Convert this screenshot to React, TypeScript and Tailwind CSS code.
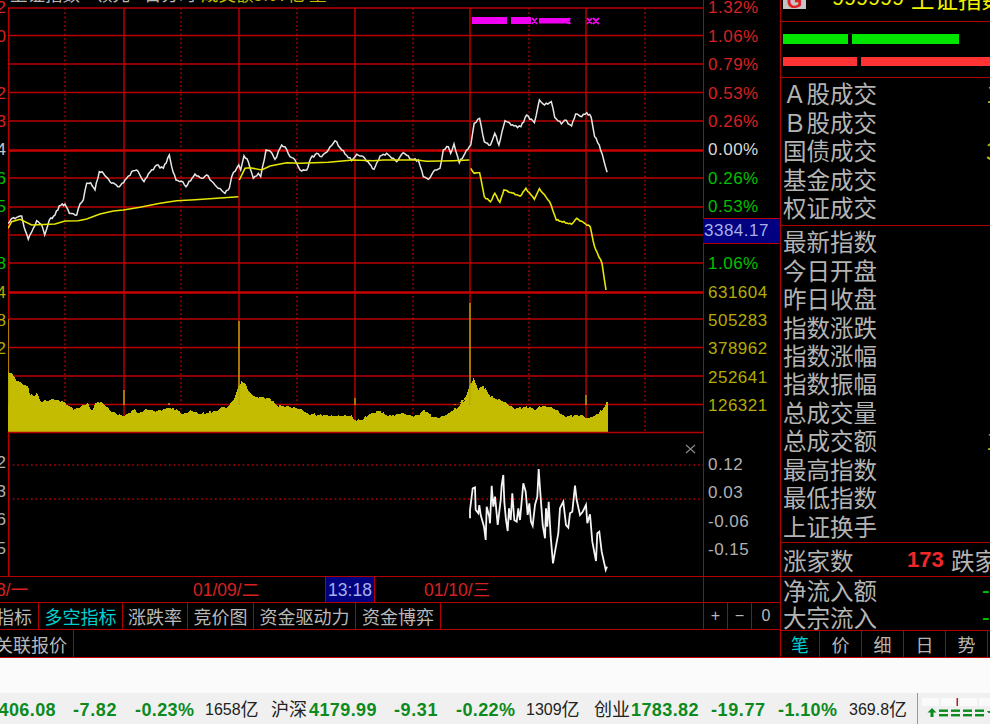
const RED = '#b80000'
const SANS = "font-['Liberation_Sans','Noto_Sans_CJK_SC',sans-serif]"
const CJK = "font-['Noto_Sans_CJK_SC',sans-serif]"

type Pt = [number, number]

const z1 = (p: number[]): Pt[] => pairs(p).map(([x, y]) => [x / 3, y / 3])
const z2 = (p: number[]): Pt[] => pairs(p).map(([x, y]) => [x / 2.958 + 460, y / 3])
const z3 = (p: number[]): Pt[] => pairs(p).map(([x, y]) => [x / 3, y / 3 + 290])
const z4 = (p: number[]): Pt[] => pairs(p).map(([x, y]) => [x / 2.958 + 460, y / 3 + 290])
const z11 = (p: number[]): Pt[] => pairs(p).map(([x, y]) => [x / 3 + 460, y / 3 + 455])

function pairs(p: number[]): Pt[] {
  const out: Pt[] = []
  for (let i = 0; i < p.length; i += 2) out.push([p[i], p[i + 1]])
  return out
}

// small wiggle between traced points so the line looks like tick data
function jag(points: Pt[], amount: number): Pt[] {
  const out: Pt[] = []
  let n = 0
  for (let i = 0; i < points.length - 1; i++) {
    const [x0, y0] = points[i]
    const [x1, y1] = points[i + 1]
    const steps = Math.max(1, Math.round((x1 - x0) / 1.6))
    for (let s = 0; s < steps; s++) {
      const t = s / steps
      const w = s === 0 ? 0 : Math.sin(n * 2.3) * Math.cos(n * 0.7) * amount
      out.push([x0 + (x1 - x0) * t, y0 + (y1 - y0) * t + w])
      n++
    }
  }
  out.push(points[points.length - 1])
  return out
}

const str = (p: Pt[]) => p.map(([x, y]) => `${x.toFixed(1)},${y.toFixed(1)}`).join(' ')

const WHITE_LINE: Pt[] = [
  ...z1([
    24, 670, 36, 655, 50, 652, 65, 648, 72, 680, 85, 718, 100, 685, 110, 662, 125, 675, 134, 705, 148, 660, 165, 645,
    178, 617, 195, 612, 208, 640, 230, 645, 240, 612, 250, 600, 260, 550, 272, 548, 285, 570, 298, 515, 310, 520, 330,
    545, 358, 560, 375, 540, 400, 512, 410, 510, 432, 545, 445, 522, 470, 495, 490, 505, 508, 465, 515, 500, 528, 540,
    548, 545, 558, 560, 585, 522, 605, 535, 620, 525, 645, 555, 675, 580, 688, 565, 695, 530, 716, 495, 722, 510, 732,
    467, 745, 485, 760, 535, 775, 520, 782, 530, 798, 450, 812, 455, 825, 478, 845, 435, 855, 440, 870, 470, 885, 480,
    900, 510, 920, 510, 932, 475, 950, 460, 965, 470, 985, 450, 1005, 422, 1025, 450, 1055, 482, 1070, 463, 1090, 470,
    1122, 508, 1140, 468, 1160, 460, 1190, 485, 1210, 458, 1235, 478, 1255, 480, 1270, 530, 1285, 538, 1305, 510, 1320,
    505, 1330, 450, 1345, 440, 1352, 460, 1362, 432, 1378, 488, 1395, 460, 1408, 440,
  ]),
  ...z2([
    32, 435, 42, 370, 58, 355, 72, 425, 90, 435, 103, 400, 115, 435, 133, 362, 160, 378, 180, 380, 197, 345, 220, 368,
    235, 300, 250, 315, 270, 305, 280, 352, 300, 372, 310, 360, 330, 378, 342, 342, 360, 350, 375, 338, 388, 352, 398,
    410, 412, 435, 425, 480, 435, 517,
  ]),
]

const YELLOW_A = z1([
  24, 685, 35, 665, 60, 658, 95, 675, 165, 672, 195, 663, 235, 662, 260, 657, 300, 642, 340, 633, 370, 630, 420, 622,
  480, 610, 530, 602, 585, 599, 650, 595, 715, 590,
])
const YELLOW_B = z1([
  718, 540, 735, 505, 750, 503, 785, 510, 810, 498, 860, 488, 900, 490, 985, 487, 1060, 480, 1120, 482, 1150, 480, 1250,
  480, 1280, 484, 1360, 482, 1408, 480,
])
const YELLOW_C = z2([
  32, 505, 42, 520, 58, 518, 72, 590, 90, 605, 103, 580, 118, 607, 130, 570, 178, 588, 195, 565, 220, 598, 235, 566, 265,
  605, 285, 660, 330, 673, 345, 655, 385, 680, 398, 740, 420, 790, 432, 870,
])

const VOLUME: Pt[] = [
  ...z3([
    24, 243, 35, 250, 45, 265, 70, 285, 85, 290, 90, 315, 105, 318, 110, 308, 122, 335, 160, 328, 190, 335, 200, 345, 225,
    358, 262, 340, 275, 362, 290, 338, 305, 335, 335, 365, 372, 380, 405, 356, 415, 370, 440, 357, 465, 365, 505, 355, 530,
    358, 548, 373, 575, 362, 600, 373, 650, 362, 665, 352, 685, 350, 705, 320, 715, 290, 725, 272, 738, 285, 745, 303, 765,
    320, 810, 325, 830, 345, 880, 352, 905, 358, 925, 372, 1000, 378, 1055, 376, 1065, 390, 1085, 390, 1105, 375, 1140,
    362, 1165, 380, 1205, 370, 1235, 378, 1255, 375, 1272, 358, 1300, 382, 1320, 382, 1345, 370, 1375, 350, 1395, 330,
  ]),
  ...z4([
    0, 340, 20, 315, 30, 285, 40, 265, 55, 300, 68, 285, 90, 320, 130, 335, 160, 355, 205, 350, 225, 360, 235, 348, 270, 350,
    310, 378, 360, 375, 378, 385, 395, 378, 420, 362, 437, 335,
  ]),
]

const SPIKES: Pt[] = [
  [8, 319],
  [124, 390],
  [169, 403],
  [239, 321],
  [355, 398],
  [455, 404],
  [470, 303],
  [586, 395],
]

const SUB_LINE = z11([
  30, 190, 30, 165, 38, 100, 45, 97, 47, 165, 55, 175, 58, 150, 62, 180, 72, 215, 77, 255, 80, 155, 88, 185, 90, 205, 95,
  92, 100, 155, 105, 125, 108, 155, 113, 210, 122, 135, 125, 90, 130, 60, 133, 140, 138, 195, 143, 228, 147, 160, 152, 195,
  157, 115, 163, 195, 170, 200, 175, 160, 180, 195, 190, 85, 197, 110, 203, 180, 208, 145, 213, 200, 218, 212, 225, 150,
  232, 125, 236, 42, 240, 100, 248, 210, 255, 250, 258, 160, 262, 215, 266, 140, 272, 245, 279, 325, 285, 290, 295, 235,
  300, 160, 310, 140, 318, 210, 325, 218, 330, 175, 337, 170, 345, 92, 350, 135, 360, 180, 368, 170, 378, 150, 382, 205,
  390, 178, 397, 260, 408, 318, 412, 235, 418, 230, 425, 290, 437, 345, 441, 335,
])

const H_LINES = [8, 35.5, 64, 92.5, 121, 178, 207, 235, 263, 319, 347.5, 376, 404.5]
const V_SOLID = [124, 239, 355, 470, 586]
const V_DOT = [65, 181, 297, 413, 529, 645]

function Chart() {
  return (
    <svg width="695" height="577" viewBox="8 0 695 577" className="block shrink-0">
      {H_LINES.map((y) => (
        <line key={y} x1="8" x2="703" y1={y} y2={y} stroke={RED} strokeWidth="1.5" />
      ))}
      {V_SOLID.map((x) => (
        <line key={x} x1={x} x2={x} y1="8" y2="432" stroke={RED} strokeWidth="1.5" />
      ))}
      {V_DOT.map((x) => (
        <line key={x} x1={x} x2={x} y1="8" y2="432" stroke={RED} strokeWidth="1.5" strokeDasharray="1.6 2.7" />
      ))}
      <line x1="8" x2="703" y1="150.5" y2="150.5" stroke="#c80000" strokeWidth="2.6" />
      <line x1="8" x2="703" y1="292.5" y2="292.5" stroke="#c80000" strokeWidth="2.6" />
      <line x1="8.5" x2="8.5" y1="8" y2="577" stroke={RED} strokeWidth="1.6" />

      {/* volume */}
      <polygon points={`8,432 ${str(jag(VOLUME, 1.6))} 607.7,432`} fill="#c4bc00" shapeRendering="crispEdges" />
      {SPIKES.map(([x, y]) => (
        <line key={x} x1={x} x2={x} y1={y} y2="405" stroke="#b4ac00" strokeWidth="1.4" />
      ))}
      <line x1="8" x2="703" y1="432.5" y2="432.5" stroke="#b80000" strokeWidth="1.5" />

      {/* price and average */}
      <polyline points={str(jag(WHITE_LINE, 1.3))} fill="none" stroke="#e6e6e6" strokeWidth="1.5" />
      <polyline points={str(YELLOW_A)} fill="none" stroke="#e6e600" strokeWidth="1.6" />
      <polyline points={str(YELLOW_B)} fill="none" stroke="#e6e600" strokeWidth="1.6" />
      <polyline points={str(jag(YELLOW_C, 0.8))} fill="none" stroke="#e6e600" strokeWidth="1.6" />

      {/* signal marks */}
      <rect x="472" y="17" width="35" height="7" fill="#f000f0" />
      <rect x="511" y="17" width="20" height="7" fill="#f000f0" />
      <rect x="539" y="18" width="29" height="5.5" fill="#f000f0" />
      <path d="M532 18l5 6m0-6l-5 6M568 18l2 6m0-6l-2 6M587 18l5 6m0-6l-5 6M593 18l6 6m0-6l-6 6" stroke="#f000f0" strokeWidth="1.8" />

      {/* sub chart */}
      <line x1="8" x2="703" y1="465" y2="465" stroke={RED} strokeWidth="1.5" strokeDasharray="1.6 3" />
      <line x1="8" x2="703" y1="499" y2="499" stroke={RED} strokeWidth="1.5" strokeDasharray="1.6 3" />
      <polyline points={str(SUB_LINE)} fill="none" stroke="#f4f4f4" strokeWidth="1.8" />
      <path d="M686 445l9 8m0-8l-9 8" stroke="#8c8c8c" strokeWidth="1.1" />
    </svg>
  )
}

const AXIS: { text: string; color: string }[] = [
  { text: '1.32%', color: 'text-[#d82020]' },
  { text: '1.06%', color: 'text-[#d82020]' },
  { text: '0.79%', color: 'text-[#d82020]' },
  { text: '0.53%', color: 'text-[#d82020]' },
  { text: '0.26%', color: 'text-[#d82020]' },
  { text: '0.00%', color: 'text-[#d8d8d8]' },
  { text: '0.26%', color: 'text-[#00c000]' },
  { text: '0.53%', color: 'text-[#00c000]' },
  { text: '', color: '' },
  { text: '1.06%', color: 'text-[#00c000]' },
  { text: '631604', color: 'text-[#b4ac00]' },
  { text: '505283', color: 'text-[#b4ac00]' },
  { text: '378962', color: 'text-[#b4ac00]' },
  { text: '252641', color: 'text-[#b4ac00]' },
  { text: '126321', color: 'text-[#b4ac00]' },
  { text: '', color: '' },
  { text: '0.12', color: 'text-[#b0b0b0]' },
  { text: '0.03', color: 'text-[#b0b0b0]' },
  { text: '-0.06', color: 'text-[#b0b0b0]' },
  { text: '-0.15', color: 'text-[#b0b0b0]' },
]

const GUTTER: { text: string; color: string }[] = [
  { text: '2', color: 'text-[#d82020]' },
  { text: '0', color: 'text-[#d82020]' },
  { text: '', color: '' },
  { text: '2', color: 'text-[#d82020]' },
  { text: '3', color: 'text-[#d82020]' },
  { text: '4', color: 'text-[#c8c8c8]' },
  { text: '6', color: 'text-[#00c000]' },
  { text: '5', color: 'text-[#00c000]' },
  { text: '', color: '' },
  { text: '8', color: 'text-[#00c000]' },
  { text: '4', color: 'text-[#b4ac00]' },
  { text: '8', color: 'text-[#b4ac00]' },
  { text: '2', color: 'text-[#b4ac00]' },
  { text: '', color: '' },
  { text: '', color: '' },
  { text: '', color: '' },
  { text: '2', color: 'text-[#b0b0b0]' },
  { text: '3', color: 'text-[#b0b0b0]' },
  { text: '6', color: 'text-[#b0b0b0]' },
  { text: '5', color: 'text-[#b0b0b0]' },
]

const GROUP_A = ['Ａ股成交', 'Ｂ股成交', '国债成交', '基金成交', '权证成交']
const GROUP_A_VALUES = ['1', '', '3', '', '']
const GROUP_B = ['最新指数', '今日开盘', '昨日收盘', '指数涨跌', '指数涨幅', '指数振幅', '总成交量', '总成交额', '最高指数', '最低指数', '上证换手']

const TICKER: { text: string; unit?: string; cls: string }[] = [
  { text: '3406.08', cls: 'w-[73px] justify-end pr-[17px] font-bold text-[#0b8a1e] text-[18px] tracking-[0.4px]' },
  { text: '-7.82', cls: 'w-[62px] font-bold text-[#0b8a1e] text-[18px] tracking-[0.6px]' },
  { text: '-0.23%', cls: 'w-[70px] font-bold text-[#0b8a1e] text-[18px] tracking-[0.4px]' },
  { text: '1658', unit: '亿', cls: 'w-[66px] text-[#222222] text-[16px]' },
  { text: '沪深', cls: 'w-[38px] text-[#222222] text-[18px]' },
  { text: '4179.99', cls: 'w-[85px] font-bold text-[#0b8a1e] text-[18px] tracking-[0.4px]' },
  { text: '-9.31', cls: 'w-[62px] font-bold text-[#0b8a1e] text-[18px] tracking-[0.6px]' },
  { text: '-0.22%', cls: 'w-[70px] font-bold text-[#0b8a1e] text-[18px] tracking-[0.4px]' },
  { text: '1309', unit: '亿', cls: 'w-[68px] text-[#222222] text-[16px]' },
  { text: '创业', cls: 'w-[37px] text-[#222222] text-[18px]' },
  { text: '1783.82', cls: 'w-[80px] font-bold text-[#0b8a1e] text-[18px] tracking-[0.4px]' },
  { text: '-19.77', cls: 'w-[67px] font-bold text-[#0b8a1e] text-[18px] tracking-[0.6px]' },
  { text: '-1.10%', cls: 'w-[71px] font-bold text-[#0b8a1e] text-[18px] tracking-[0.4px]' },
  { text: '369.8', unit: '亿', cls: 'w-[68px] text-[#222222] text-[16px]' },
]

function Gauge() {
  return (
    <svg width="69" height="24" viewBox="0 0 69 24" className="block shrink-0">
      <rect x="1" y="1" width="17" height="8" fill="#fafafa" />
      <rect x="20" y="1" width="17" height="8" fill="#fafafa" />
      <rect x="39" y="1" width="17" height="8" fill="#fafafa" />
      <rect x="58" y="1" width="11" height="8" fill="#fafafa" />
      <rect x="35.5" y="1" width="1.5" height="8" fill="#b02020" />
      <path d="M11 11l-4.5 4.5h3V20h3v-4.5h3z" fill="#0b8a1e" />
      {[18, 30, 42, 54].map((x) => (
        <g key={x} fill="#0b8a1e">
          <rect x={x} y="12.5" width="9" height="2.4" />
          <rect x={x} y="17" width="9" height="2.4" />
        </g>
      ))}
      <path d="M66 14h3v2h-1.5z" fill="#0b8a1e" />
    </svg>
  )
}

export default function App() {
  return (
    <div className={`flex h-[724px] w-[990px] flex-col overflow-hidden bg-[#f0f0f0] ${SANS}`}>
      <div className="flex h-[658px] shrink-0 border-b border-[#c00000] bg-black">
        {/* left: chart area */}
        <div className="flex w-[780px] shrink-0 flex-col">
          <div className="relative flex h-[577px] shrink-0 border-b border-[#b00000]">
            <div className="-mt-[6px] mr-[2px] flex w-[6px] shrink-0 flex-col overflow-hidden">
              {GUTTER.map((g, i) => (
                <div key={i} className={`flex h-[28.45px] shrink-0 items-center justify-end text-[17px] leading-[20px] ${g.color}`}>
                  {g.text}
                </div>
              ))}
            </div>
            <Chart />
            <div className="relative w-[77px] shrink-0 border-l border-[#b80000]">
              <div className="-mt-[6px] flex flex-col pl-[4px]">
                {AXIS.map((a, i) => (
                  <div
                    key={i}
                    className={`flex shrink-0 items-center text-[17px] leading-[20px] tracking-[0.5px] whitespace-nowrap ${a.color} ${
                      i === 15 ? 'h-[30px]' : 'h-[28.45px]'
                    }`}
                  >
                    {a.text}
                  </div>
                ))}
              </div>
              <div className="absolute top-[218px] -left-px flex h-[26px] w-[77px] items-center border-y border-[#b80000] bg-[#000080] pl-[1px] text-[17px] leading-[20px] tracking-[0.5px] text-[#a8b0e8]">
                3384.17
              </div>
            </div>
            {/* title strip, mostly scrolled off the top of the window */}
            <div className={`absolute top-0 left-[10px] flex h-[4px] items-end overflow-hidden text-[17.5px] leading-[20px] whitespace-nowrap text-[#b8b8b8] ${CJK}`}>
              <span className="w-[85px] shrink-0">上证指数</span>
              <span className="w-[49px] shrink-0">领先</span>
              <span className="w-[57px] shrink-0">日分时</span>
              <span className="text-[#c4bc00]">成交额5.07亿 量</span>
            </div>
          </div>

          <div className={`flex h-[26px] shrink-0 items-stretch border-b border-[#b00000] text-[17.5px] leading-[22px] text-[#d82020] ${SANS}`}>
            <div className="flex w-[703px] shrink-0 items-center overflow-hidden">
              <span className="-ml-[38px] w-[231px] shrink-0 whitespace-nowrap">01/08/一</span>
              <span className="w-[132px] shrink-0 whitespace-nowrap">01/09/二</span>
              <span className="flex h-full w-[50px] shrink-0 items-center justify-center border-x border-[#b00000] bg-[#000080] text-[#a8b0e8]">
                13:18
              </span>
              <span className="ml-[49px] whitespace-nowrap">01/10/三</span>
            </div>
            <div className="flex-1 border-l border-[#b00000]" />
          </div>

          <div className={`flex h-[27px] shrink-0 items-stretch border-b border-[#b00000] text-[18px] leading-[24px] text-[#b8b8b8] ${CJK}`}>
            <div className="flex w-[703px] shrink-0 overflow-hidden">
              <div className="flex w-[39px] shrink-0 items-center justify-end border-r border-[#b00000] pr-[6px] whitespace-nowrap">指标</div>
              <div className="flex w-[84px] shrink-0 items-center justify-center border-r border-[#b00000] text-[#00d0d0]">多空指标</div>
              <div className="flex w-[65px] shrink-0 items-center justify-center border-r border-[#b00000]">涨跌率</div>
              <div className="flex w-[66px] shrink-0 items-center justify-center border-r border-[#b00000]">竞价图</div>
              <div className="flex w-[102px] shrink-0 items-center justify-center border-r border-[#b00000]">资金驱动力</div>
              <div className="flex w-[85px] shrink-0 items-center justify-center border-r border-[#b00000]">资金博弈</div>
            </div>
            <div className={`flex flex-1 border-l border-[#b00000] text-[16px] text-[#b8b8b8] ${SANS}`}>
              <div className="flex w-[24px] items-center justify-center border-r border-[#b00000]">+</div>
              <div className="flex w-[24px] items-center justify-center border-r border-[#b00000]">−</div>
              <div className="flex flex-1 items-center justify-center">0</div>
            </div>
          </div>

          <div className={`flex flex-1 text-[18px] leading-[24px] text-[#b8b8b8] ${CJK}`}>
            <div className="flex w-[74px] shrink-0 items-center justify-end overflow-hidden border-r border-[#b00000] pr-[6px] whitespace-nowrap">
              关联报价
            </div>
          </div>
        </div>

        {/* right: quote panel */}
        <div className={`flex flex-1 flex-col overflow-hidden border-l border-[#b00000] text-[23.5px] leading-[26px] text-[#b4b4b4] ${CJK}`}>
          <div className="flex h-[22px] shrink-0 items-start border-b border-[#b00000] pl-[2px]">
            <div className="flex h-[9px] w-[23px] shrink-0 items-end justify-center overflow-hidden bg-[#c4c4c4] text-[20px] leading-[20px] font-bold text-[#e02020]">
              <span className={`-mb-[2px] ${SANS}`}>G</span>
            </div>
            <div className="-mt-[15px] ml-[26px] flex items-center whitespace-nowrap text-[#f0f000]">
              <span className={`text-[21.6px] ${SANS}`}>999999</span>
              <span className="ml-[7px]">上证指数</span>
            </div>
          </div>
          <div className="flex h-[56px] shrink-0 flex-col justify-center gap-[13px] border-b border-[#b00000] pl-[2px]">
            <div className="flex h-[10px] gap-[4px]">
              <div className="h-full w-[65px] bg-[#00e600]" />
              <div className="h-full w-[107px] bg-[#00e600]" />
            </div>
            <div className="flex h-[9px] gap-[4px]">
              <div className="h-full w-[74px] shrink-0 bg-[#ff3333]" />
              <div className="h-full w-[140px] shrink-0 bg-[#ff3333]" />
            </div>
          </div>
          <div className="flex h-[148px] shrink-0 flex-col border-b border-[#b00000] pt-[1px] pl-[2px]">
            {GROUP_A.map((label, i) => (
              <div key={label} className="flex h-[28.45px] shrink-0 items-center whitespace-nowrap">
                <span className="w-[203px] shrink-0">{label}</span>
                <span className="text-[#c4bc00]">{GROUP_A_VALUES[i]}</span>
              </div>
            ))}
          </div>
          <div className="flex h-[317px] shrink-0 flex-col border-b border-[#b00000] pt-[1px] pl-[2px]">
            {GROUP_B.map((label) => (
              <div key={label} className="flex h-[28.45px] shrink-0 items-center whitespace-nowrap">
                <span className="w-[203px] shrink-0">{label}</span>
                {label === '总成交额' && <span className="text-[#c4bc00]">1</span>}
              </div>
            ))}
          </div>
          <div className="flex h-[34px] shrink-0 items-center border-b border-[#b00000] pl-[2px] whitespace-nowrap">
            <span className="w-[124px] shrink-0">涨家数</span>
            <span className={`w-[44px] shrink-0 text-[22px] font-bold text-[#f02828] ${SANS}`}>173</span>
            <span>跌家数</span>
          </div>
          <div className="flex h-[54px] shrink-0 flex-col justify-center border-b border-[#b00000] pl-[2px]">
            <div className="flex h-[27px] shrink-0 items-center whitespace-nowrap">
              <span className="w-[199px] shrink-0">净流入额</span>
              <span className={`text-[#00c000] ${SANS}`}>-1</span>
            </div>
            <div className="flex h-[27px] shrink-0 items-center whitespace-nowrap">
              <span className="w-[199px] shrink-0">大宗流入</span>
              <span className={`text-[#00c000] ${SANS}`}>-2</span>
            </div>
          </div>
          <div className="flex flex-1 text-[18px]">
            <div className="flex w-[39px] shrink-0 items-center justify-center border-r border-[#b00000] text-[#00d0d0]">笔</div>
            <div className="flex w-[42px] shrink-0 items-center justify-center border-r border-[#b00000]">价</div>
            <div className="flex w-[42px] shrink-0 items-center justify-center border-r border-[#b00000]">细</div>
            <div className="flex w-[42px] shrink-0 items-center justify-center border-r border-[#b00000]">日</div>
            <div className="flex w-[42px] shrink-0 items-center justify-center border-r border-[#b00000]">势</div>
          </div>
        </div>
      </div>

      <div className="h-[35px] shrink-0 bg-[#fbfbfb]" />

      <div className={`flex flex-1 items-center ${SANS}`}>
        {TICKER.map((t) => (
          <div key={t.text} className={`flex shrink-0 items-center overflow-hidden pt-[3px] whitespace-nowrap ${t.cls}`}>
            {t.text}
            {t.unit && <span className="text-[18px]">{t.unit}</span>}
          </div>
        ))}
        <div className="flex h-full items-center border-l border-[#999999] pl-[3px]">
          <Gauge />
        </div>
      </div>
    </div>
  )
}
